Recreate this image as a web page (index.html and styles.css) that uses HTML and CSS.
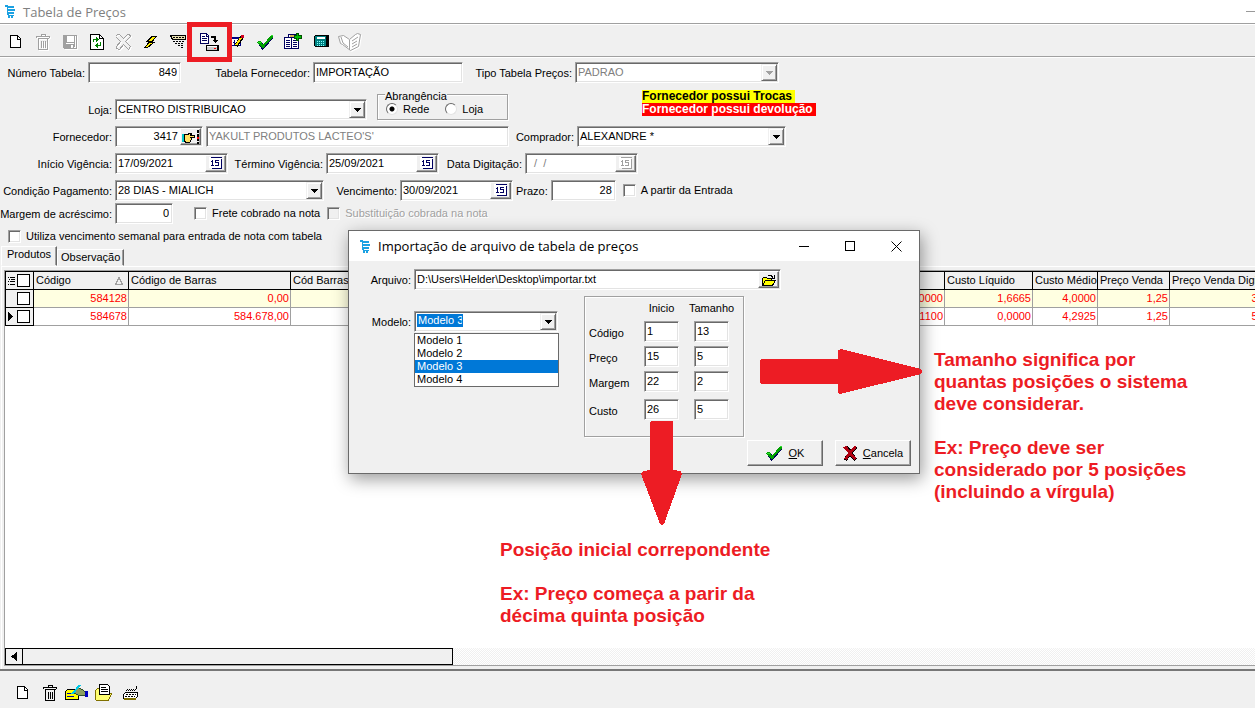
FILE: index.html
```html
<!DOCTYPE html>
<html lang="pt-BR">
<head>
<meta charset="utf-8">
<title>Tabela de Preços</title>
<link rel="stylesheet" href="styles.css">
</head>
<body>
<svg class="defs" aria-hidden="true">
  <symbol id="i-cart" viewBox="0 0 10 13"><path fill="#1ba1e2" d="M0 0h3v1h6v2H3v1h7v2H3v1h6v2H3l1 1h5v1H8v2H6v-2H5v2H3v-2l-1-3V2H0z"/><path fill="#fff" d="M3 3h6v1H3z" opacity=".5"/></symbol>
  <symbol id="i-new" viewBox="0 0 12 13"><path fill="#fff" stroke="#000" d="M.5.5h7l3 3v9H.5z"/><path fill="none" stroke="#000" d="M7.500 1v3h3"/></symbol>
  <symbol id="i-trash" viewBox="0 0 14 16"><path fill="none" stroke="currentColor" d="M.5 4V2.500h13V4M5 2V.5h4V2M1.500 4.500h11M2.500 5v10.500h9V5M5.500 6.500v7M7.500 6.500v7M9.500 6.500v7"/></symbol>
  <symbol id="i-check" viewBox="0 0 17 16"><path fill="#00005a" d="M1 9l3-2 3 4 8-9 1 2-8 10-3 2z"/><path fill="#00a000" d="M0 8l2-1h2l2 4 8-10h2v2L8 12l-2 2H5z"/><path fill="none" stroke="#30e030" d="M1 8.500h2.500M14 1.500h2"/></symbol>
  <symbol id="i-cal" viewBox="0 0 14 13"><path fill="#fff" d="M0 0h12v11H0z"/><path fill="none" stroke="currentColor" d="M1.500.5h11M2.500 11.500h10v-10M3.500 3v6M2 4.500h2M2 8.500h3M10 3.500H6.500v2h3v3H6"/></symbol>
</svg>

<header class="titlebar">
  <svg class="cart"><use href="#i-cart"/></svg>
  <span>Tabela de Preços</span>
  <button class="main-min" aria-label="Minimizar"></button>
</header>

<nav class="toolbar" aria-label="Ferramentas">
  <button class="tool" aria-label="Novo"><svg width="12" height="13"><use href="#i-new"/></svg></button>
  <button class="tool tool--off" aria-label="Excluir"><svg width="14" height="16"><use href="#i-trash"/></svg></button>
  <button class="tool tool--off" aria-label="Salvar"><svg width="14" height="14" viewBox="0 0 14 14"><path fill="none" stroke="currentColor" d="M.5.500h13v13H1.500l-1-1zM3 1v6h8V1M3.500 13V9h7v4"/><path fill="currentColor" d="M4 9h4v4H4zM1 1h2v12H1zM11 2h1v10h-1z"/><path fill="#fff" d="M4 1h6v5H4zM9 10h1v2H9z"/></svg></button>
  <button class="tool" aria-label="Atualizar"><svg width="14" height="16" viewBox="0 0 14 16"><path fill="#fff" stroke="#000" d="M.5.500h9l4 4v11H.5z"/><path fill="none" stroke="#000" d="M9.500 1v3.500H13"/><path fill="none" stroke="#008000" d="M3.500 8V5.500H6M10.500 8v3.500H8"/><path fill="#008000" d="M6 3l3 2.500L6 8zM8 9v5l-3-2.500z"/></svg></button>
  <button class="tool tool--off" aria-label="Cancelar"><svg width="16" height="16" viewBox="0 0 16 16"><path fill="none" stroke="currentColor" d="M1.500.5h2l4 4 4-4h2l1 2-5 5 5 5-2 3-5-5-4 5-3-1v-2l4-5-5-5z"/></svg></button>
  <button class="tool" aria-label="Executar"><svg width="13" height="12" viewBox="0 0 13 12"><path fill="#fff000" stroke="#000" d="M12.500.5H8l-5 5h3l-5.500 6h3l7-5.500H7.500z"/></svg></button>
  <button class="tool" aria-label="Impressão"><svg width="16" height="15" viewBox="0 0 16 15"><path fill="#e8e0b0" stroke="#000" d="M.5 1.500h15v4H2.500z"/><path fill="none" stroke="#000" stroke-dasharray="2 1" d="M3 3.500h12M3 7.500h12M5 9.500h9M8 11.500h6M11 13.500h3"/></svg></button>
  <button class="tool tool--marked" aria-label="Importar arquivo"><svg width="19" height="18" viewBox="0 0 19 18"><path fill="#fff" stroke="#00005a" d="M.5.500h6l2 2v8H.5z"/><path fill="none" stroke="#00005a" d="M2 3.500h3M2 5.500h5M2 7.500h5M6.500 1v2H8"/><path fill="none" stroke="#000" stroke-width="2" d="M11 4h4v4"/><path fill="#000" d="M12 7h6l-3 3zM6 12h13v6H6z"/><path fill="#ccc" d="M7 13h10v4H7z"/><path fill="#fff" d="M7 13h10v1H7z"/><path fill="#f00" d="M14 15h2v1h-2z"/></svg></button>
  <button class="tool" aria-label="Editar"><svg width="16" height="15" viewBox="0 0 16 15"><path fill="#fff" stroke="#000080" d="M.5 3.500h11v8H.5z"/><path fill="#000080" d="M0 3h12v2H0z"/><path fill="none" stroke="#000080" stroke-dasharray="2 1" d="M1 8.500h10M5.500 6v6"/><path stroke="#000" stroke-width="4" d="M7 12l6-9"/><path stroke="#ffe000" stroke-width="2" d="M7 11l5-7"/><path fill="#d00020" d="M12 1h3v3h-3z"/></svg></button>
  <button class="tool" aria-label="Confirmar"><svg width="17" height="16"><use href="#i-check"/></svg></button>
  <button class="tool" aria-label="Copiar tabela"><svg width="18" height="17" viewBox="0 0 18 17"><path fill="#fff" stroke="#000060" d="M4.500 1.500h10v11h-10z"/><path fill="#fff" stroke="#000060" d="M.5 4.500h7v11H.5zM7.500 4.500h7v11h-7z"/><path fill="none" stroke="#000060" d="M2 7.500h4M2 9.500h4M2 11.500h4M2 13.500h4M9 7.500h4M9 9.500h4M9 11.500h4M9 13.500h4"/><path fill="#d8b050" d="M6 2h6v2H6z"/><path fill="#00c000" stroke="#005000" d="M12.500.500h2v2h3v3h-3v2h-2v-2h-2v-3h2z"/></svg></button>
  <button class="tool" aria-label="Calculadora"><svg width="15" height="13" viewBox="0 0 15 13"><path fill="#000" d="M0 1L2 0h12l1 1v11H1l-1-1z"/><path fill="#008080" d="M1 1h11v10H1z"/><path fill="#fff" d="M3 2h8v2H3z"/><path fill="none" stroke="#80ffff" stroke-dasharray="1 1" d="M3 6.500h8M3 8.500h8M3 10.500h8"/></svg></button>
  <button class="tool tool--off" aria-label="Catálogo"><svg class="smooth" width="23" height="18" viewBox="0 0 23 18"><path fill="#fff" stroke="currentColor" d="M.5 3.500l5-1 6 4 6-5 2-1 3 1-2 12-8 4-8-6-2-1z"/><path fill="none" stroke="currentColor" d="M11.500 7v10M14 8l6-4M14 11l5-3M14 14l5-3M3 4l2 6 5 4"/></svg></button>
</nav>

<form class="form">
  <div class="row">
    <label class="lbl lbl--85" for="num">Número Tabela:</label>
    <span class="field w-93"><input class="num" id="num" value="849"></span>
    <label class="lbl lbl--126" for="forntab">Tabela Fornecedor:</label>
    <span class="field w-150"><input id="forntab" value="IMPORTAÇÃO"></span>
    <label class="lbl lbl--106" for="tipo">Tipo Tabela Preços:</label>
    <span class="field field--drop field--off w-204"><select id="tipo" disabled><option>PADRAO</option></select></span>
  </div>
  <div class="row row--group">
    <label class="lbl lbl--main" for="loja">Loja:</label>
    <span class="field field--drop w-252"><select id="loja"><option>CENTRO DISTRIBUICAO</option></select></span>
    <fieldset class="group">
      <legend>Abrangência</legend>
      <label class="opt"><input class="radio" type="radio" name="abr" checked>Rede</label>
      <label class="opt"><input class="radio" type="radio" name="abr">Loja</label>
    </fieldset>
    <div class="alerts">
      <strong class="alert alert--yellow">Fornecedor possui Trocas</strong>
      <strong class="alert alert--red">Fornecedor possui devolução</strong>
    </div>
  </div>
  <div class="row">
    <label class="lbl lbl--main" for="forn">Fornecedor:</label>
    <span class="field w-88"><input class="num" id="forn" value="3417"><button type="button" class="mini" aria-label="Procurar"><svg width="18" height="14" viewBox="0 0 18 14"><path fill="#00c8c8" d="M0 4h2v8H0z"/><path fill="#ffe060" stroke="#000" d="M2.500 4.500h3l2-1h2l-1 2h4v2h-4l1 1-1 3-1 1h-3l-2-1z"/><path stroke="#000" stroke-width="2" stroke-dasharray="3 1" d="M16 0v14"/><path fill="#f00" d="M15 7h2v2h-2z"/></svg></button></span>
    <span class="field field--off w-303"><input aria-label="Nome do fornecedor" value="YAKULT PRODUTOS LACTEO'S'" disabled></span>
    <label class="lbl lbl--62" for="comp">Comprador:</label>
    <span class="field field--drop w-209"><select id="comp"><option>ALEXANDRE *</option></select></span>
  </div>
  <div class="row">
    <label class="lbl lbl--main" for="ini">Início Vigência:</label>
    <span class="field w-113"><input id="ini" value="17/09/2021"><button type="button" class="mini mini--cal" aria-label="Calendário"><svg width="14" height="13"><use href="#i-cal"/></svg></button></span>
    <label class="lbl lbl--92" for="fim">Término Vigência:</label>
    <span class="field w-113"><input id="fim" value="25/09/2021"><button type="button" class="mini mini--cal" aria-label="Calendário"><svg width="14" height="13"><use href="#i-cal"/></svg></button></span>
    <label class="lbl lbl--80" for="dig">Data Digitação:</label>
    <span class="field field--off w-113"><input id="dig" value="&nbsp; /&nbsp; /" disabled><button type="button" class="mini mini--cal" aria-label="Calendário" disabled><svg width="14" height="13"><use href="#i-cal"/></svg></button></span>
  </div>
  <div class="row">
    <label class="lbl lbl--main" for="cond">Condição Pagamento:</label>
    <span class="field field--drop w-209"><select id="cond"><option>28 DIAS - MIALICH</option></select></span>
    <label class="lbl lbl--70" for="venc">Vencimento:</label>
    <span class="field w-113"><input id="venc" value="30/09/2021"><button type="button" class="mini mini--cal" aria-label="Calendário"><svg width="14" height="13"><use href="#i-cal"/></svg></button></span>
    <label class="lbl" for="prazo">Prazo:</label>
    <span class="field w-65"><input class="num" id="prazo" value="28"></span>
    <label class="opt opt--near"><input class="check" type="checkbox">A partir da Entrada</label>
  </div>
  <div class="row row--tight">
    <label class="lbl lbl--main" for="marg">Margem de acréscimo:</label>
    <span class="field w-58"><input class="num" id="marg" value="0"></span>
    <label class="opt opt--gap"><input class="check" type="checkbox">Frete cobrado na nota</label>
    <label class="opt opt--off opt--near"><input class="check" type="checkbox" disabled>Substituição cobrada na nota</label>
  </div>
  <div class="row row--tight">
    <label class="opt opt--start"><input class="check" type="checkbox">Utiliza vencimento semanal para entrada de nota com tabela</label>
  </div>
</form>

<main class="content">
  <div class="tabs" role="tablist">
    <button class="tab tab--on" role="tab" aria-selected="true">Produtos</button>
    <button class="tab" role="tab" aria-selected="false">Observação</button>
  </div>
  <section class="panel">
    <div class="grid">
      <table>
        <colgroup><col class="c-sel"><col class="c-cod"><col class="c-bar"><col class="c-cbar"><col class="c-tot"><col class="c-liq"><col class="c-med"><col class="c-ven"><col class="c-dig"></colgroup>
        <thead>
          <tr>
            <th class="sel"><div class="selbox"><svg width="8" height="10" viewBox="0 0 8 10"><path fill="none" stroke="#000" d="M0 1.500h1M2 1.500h5M1 3.500h1M3 3.500h4M0 5.500h1M2 5.500h5M0 8.500h1M2 8.500h5"/></svg><input class="gcheck" type="checkbox" aria-label="Marcar todos"></div></th>
            <th><div class="sorted">Código<svg width="8" height="8" viewBox="0 0 8 8"><path fill="none" stroke="#a0a0a0" d="M.5 7.500h7L4 .5z"/></svg></div></th>
            <th>Código de Barras</th><th>Cód Barras</th><th></th><th>Custo Líquido</th><th>Custo Médio</th><th>Preço Venda</th><th>Preço Venda Digitado</th>
          </tr>
        </thead>
        <tbody>
          <tr class="alt">
            <td class="sel"><div class="selbox"><input class="gcheck" type="checkbox" aria-label="Marcar 584128"></div></td>
            <td>584128</td><td>0,00</td><td></td><td>1,0000</td><td>1,6665</td><td>4,0000</td><td>1,25</td><td>3,00</td>
          </tr>
          <tr>
            <td class="sel"><div class="selbox"><svg width="5" height="9" viewBox="0 0 5 9"><path d="M0 0l5 4.500L0 9z"/></svg><input class="gcheck" type="checkbox" aria-label="Marcar 584678"></div></td>
            <td>584678</td><td>584.678,00</td><td></td><td>1,1100</td><td>0,0000</td><td>4,2925</td><td>1,25</td><td>5,00</td>
          </tr>
        </tbody>
      </table>
      <div class="scroll"><button class="scroll-left" aria-label="Rolar à esquerda"><svg width="6" height="9" viewBox="0 0 6 9"><path d="M6 0L0 4.500 6 9z"/></svg></button><div class="thumb"></div></div>
    </div>
  </section>
</main>

<footer class="bottombar">
  <button class="tool" aria-label="Novo item"><svg width="12" height="13"><use href="#i-new"/></svg></button>
  <button class="tool" aria-label="Excluir item"><svg width="14" height="16"><use href="#i-trash"/></svg></button>
  <button class="tool" aria-label="Editar item"><svg width="23" height="15" viewBox="0 0 23 15"><path fill="#ff0" stroke="#000" d="M.5 6.500l2-2h11v10H.5z"/><path stroke="#0000a0" d="M2 8.500h9M2 11.500h7"/><path fill="#8da060" stroke="#305030" d="M7.500 8.500l6-6 5 3 2 2v3h-7l-3-2z"/><path fill="#0000c0" d="M20 6h3v6h-3z"/><path stroke="#00c8e8" stroke-width="2" d="M7 9l8-9"/></svg></button>
  <button class="tool" aria-label="Abrir item"><svg width="17" height="17" viewBox="0 0 17 17"><path fill="#ffff70" stroke="#807000" d="M.5 15.500V6.500l2-2h9v5h5l-3 7h-12z"/><path fill="#fff" stroke="#000" d="M4.500.500h8l2 2v8h-10z"/><path stroke="#000" d="M6 3.500h5M6 5.500h7M6 7.500h7"/></svg></button>
  <button class="tool" aria-label="Teclado"><svg width="15" height="14" viewBox="0 0 15 14"><path fill="none" stroke="#000" stroke-dasharray="1 1" d="M3 4.500h9M4 3.500h8"/><path stroke="#000" d="M13.500 0v3M12 3.500h1"/><path fill="#fff" stroke="#000" d="M2.500 6.500h12v4l-2 2H.5v-4z"/><path stroke="#807000" stroke-width="2" d="M1 13h12"/><path stroke="#000" stroke-dasharray="2 1" d="M3 8.500h10M2 10.500h10"/></svg></button>
</footer>

<section class="dialog" role="dialog" aria-labelledby="dlg-title">
  <header class="dlg-title">
    <svg class="cart"><use href="#i-cart"/></svg>
    <h1 id="dlg-title">Importação de arquivo de tabela de preços</h1>
    <button class="win" aria-label="Minimizar"><svg width="11" height="11" viewBox="0 0 11 11"><path stroke="#000" d="M0 5.500h10"/></svg></button>
    <button class="win" aria-label="Maximizar"><svg width="11" height="11" viewBox="0 0 11 11"><path fill="none" stroke="#000" d="M.5.500h9v9h-9z"/></svg></button>
    <button class="win" aria-label="Fechar"><svg class="smooth" width="11" height="11" viewBox="0 0 11 11"><path stroke="#000" d="M.5.500l10 10M10.500.500l-10 10"/></svg></button>
  </header>
  <div class="dlg-body">
    <div class="row">
      <label class="lbl lbl--62" for="arq">Arquivo:</label>
      <span class="field w-367"><input id="arq" value="D:\Users\Helder\Desktop\importar.txt"><button type="button" class="mini" aria-label="Abrir arquivo"><svg width="14" height="12" viewBox="0 0 14 12"><path fill="none" stroke="#000" d="M6 1.500h3l2 2M12.500 1v3H9"/><path fill="#ff0" stroke="#000" d="M.5 11V4.500l1-1h3l1 1h4v2h4l-3 5H.5l3-5h6"/></svg></button></span>
    </div>
    <div class="dlg-cols">
      <div class="row row--model">
        <label class="lbl lbl--62" for="mod">Modelo:</label>
        <span class="field field--drop field--open w-144"><select class="picked" id="mod"><option>Modelo 3</option><option>Modelo 1</option><option>Modelo 2</option><option>Modelo 4</option></select>
          <ul class="list" role="listbox" aria-label="Modelos">
            <li role="option">Modelo 1</li><li role="option">Modelo 2</li><li class="on" role="option" aria-selected="true">Modelo 3</li><li role="option">Modelo 4</li>
          </ul>
        </span>
      </div>
      <div class="positions">
        <span></span><span class="poshead">Inicio</span><span class="poshead">Tamanho</span>
        <label for="p1">Código</label><span class="field"><input id="p1" value="1"></span><span class="field"><input aria-label="Tamanho do código" value="13"></span>
        <label for="p2">Preço</label><span class="field"><input id="p2" value="15"></span><span class="field"><input aria-label="Tamanho do preço" value="5"></span>
        <label for="p3">Margem</label><span class="field"><input id="p3" value="22"></span><span class="field"><input aria-label="Tamanho da margem" value="2"></span>
        <label for="p4">Custo</label><span class="field"><input id="p4" value="26"></span><span class="field"><input aria-label="Tamanho do custo" value="5"></span>
      </div>
    </div>
    <div class="actions">
      <button class="btn"><svg width="17" height="16"><use href="#i-check"/></svg><span><u>O</u>K</span></button>
      <button class="btn"><svg width="14" height="15" viewBox="0 0 14 15"><path fill="#000" d="M1 1l4-1 3 4 4-4 2 2-4 5 4 6-3 2-4-5-3 5-3-1 1-3 3-4z"/><path fill="#b00010" d="M0 1l4-1 3 5 4-5h2v2L9 7l4 5-2 2-4-5-3 5-3-1 4-6z"/></svg><span><u>C</u>ancela</span></button>
    </div>
  </div>
</section>

<svg class="arrow arrow--right" viewBox="0 0 162 46"><path d="M1 10h77V1l3-1 80 20q2 2 0 5L80 45l-2-1v-9H1l-1-1V11z"/></svg>
<svg class="arrow arrow--down" viewBox="0 0 41 104"><path d="M10 0h21l1 1v48l8 1 1 3-18 50q-2 2-4 0L0 53l2-3 7-1V1z"/></svg>
<aside class="note note--down"><p>Posição inicial correpondente</p><p>Ex: Preço começa a parir da<br>décima quinta posição</p></aside>
<aside class="note note--right"><p>Tamanho significa por<br>quantas posições o sistema<br>deve considerar.</p><p>Ex: Preço deve ser<br>considerado por 5 posições<br>(incluindo a vírgula)</p></aside>
</body>
</html>
```
FILE: styles.css
```css
*, *::before, *::after { box-sizing: border-box; }
body {
  margin: 0;
  height: 100vh;
  display: flex;
  flex-direction: column;
  position: relative;
  overflow: hidden;
  background: #f0f0f0;
  color: #000;
  font: 11px/13px "Liberation Sans", Arial, sans-serif;
}
button, input, select { font: inherit; color: inherit; margin: 0; }
button { padding: 0; border: 0; background: none; }
svg { display: block; flex: none; shape-rendering: crispEdges; }
.smooth { shape-rendering: auto; }
.defs { position: absolute; width: 0; height: 0; }
.cart { width: 10px; height: 13px; }

/* Title bar and toolbars */
.titlebar {
  display: flex; align-items: center; gap: 8px;
  height: 23px; padding: 0 0 0 5px;
  background: #fff; color: #808080;
  font: 13px/18px "Open Sans", "Noto Sans", sans-serif;
}
.main-min { margin-left: auto; width: 9px; height: 1px; background: #999; }
.toolbar {
  display: flex; align-items: center;
  height: 35px; padding: 2px 0 0 2px;
  border-top: 1px solid #a0a0a0; border-bottom: 1px solid #fff;
  box-shadow: inset 0 1px #fff, inset 0 -1px #a0a0a0;
}
.tool { display: grid; place-items: center; flex: none; width: 27px; height: 26px; }
.tool--marked ~ .tool { width: 28px; }
.tool--off { color: #a0a0a0; filter: drop-shadow(1px 1px #fff); }
.tool--marked {
  width: 45px; height: 40px; margin: 0 -9px 0 -4px;
  border: 5px solid #ed1c24; background: #f0f0f0; z-index: 1; position: relative;
}
.bottombar {
  display: flex; align-items: center; height: 39px; flex: none;
  padding: 6px 0 0 9px; border-top: 2px solid #777;
}

/* Form */
.form { display: flex; flex-direction: column; gap: 6px; padding-top: 4px; }
.row { display: flex; align-items: center; gap: 3px; min-height: 21px; }
.row--tight { margin-top: -4px; }
.row--group { min-height: 27px; margin-top: 4px; align-items: flex-end; }
.row--group .lbl { padding-bottom: 3px; }
.lbl { text-align: right; white-space: nowrap; padding-top: 1px; flex: none; }
.lbl--main { width: 112px; }
.lbl--62 { width: 62px; }
.lbl--70 { width: 70px; }
.lbl--80 { width: 80px; }
.lbl--85 { width: 85px; }
.lbl--92 { width: 92px; }
.lbl--106 { width: 106px; }
.lbl--126 { width: 126px; }
.field {
  position: relative;
  display: flex; height: 21px; flex: none; padding: 1px;
  background: #fff; border: 1px solid; border-color: #a0a0a0 #fff #fff #a0a0a0;
  box-shadow: inset 1px 1px #696969, inset -1px -1px #e3e3e3;
}
.field input, .field select {
  flex: 1; min-width: 0; width: 100%; height: 16px;
  padding: 0 1px; border: 0; outline: 0; background: transparent;
  appearance: none; line-height: 16px; opacity: 1;
}
.field .num { text-align: right; padding-right: 2px; }
.field--off { color: #808080; }
.field--drop { --arrow: #000; }
.field--off.field--drop { --arrow: #a0a0a0; }
.field--drop::after {
  content: ""; width: 16px; margin-left: auto; flex: none;
  border: 1px solid; border-color: #f0f0f0 #696969 #696969 #f0f0f0;
  box-shadow: inset 1px 1px #fff, inset -1px -1px #a0a0a0;
  background: linear-gradient(var(--arrow) 0 0) center 6px / 7px 1px no-repeat,
    linear-gradient(var(--arrow) 0 0) center 7px / 5px 1px no-repeat,
    linear-gradient(var(--arrow) 0 0) center 8px / 3px 1px no-repeat,
    linear-gradient(var(--arrow) 0 0) center 9px / 1px 1px no-repeat, #f0f0f0;
}
.mini {
  display: grid; place-items: center; flex: none; width: 21px;
  background: #f0f0f0; border: 1px solid;
  border-color: #fff #696969 #696969 #fff; box-shadow: inset -1px -1px #a0a0a0;
}
.mini--cal { color: #000060; }
.mini:disabled { color: #a0a0a0; }
.w-58 { width: 58px; }
.w-65 { width: 65px; }
.w-88 { width: 88px; }
.w-93 { width: 93px; }
.w-113 { width: 113px; }
.w-144 { width: 144px; }
.w-150 { width: 150px; }
.w-204 { width: 204px; }
.w-209 { width: 209px; }
.w-252 { width: 252px; }
.w-303 { width: 303px; }
.w-367 { width: 367px; }
.group {
  position: relative; display: flex; align-items: center; gap: 16px;
  width: 131px; height: 26px; margin: 0 0 0 7px; padding: 4px 0 0 8px;
  border: 1px solid #a0a0a0; box-shadow: 1px 1px #fff, inset 1px 1px #fff;
}
.group legend { position: absolute; top: -5px; left: 7px; padding: 0; background: #f0f0f0; line-height: 12px; }
.alerts { display: flex; flex-direction: column; align-items: flex-start; align-self: flex-start; margin: -3px 0 0 131px; font-size: 12px; }
.alert { padding-right: 3px; }
.alert--yellow { background: #ff0; }
.alert--red { background: #f00; color: #fff; }
.opt { display: flex; align-items: center; gap: 5px; white-space: nowrap; }
.opt--start { margin-left: 8px; }
.opt--gap { margin-left: 18px; }
.opt--near { margin-left: 4px; }
.opt--off { color: #a0a0a0; text-shadow: 1px 1px #fff; }
.check, .radio, .gcheck { appearance: none; flex: none; width: 13px; height: 13px; margin: 0; background: #fff; }
.check {
  border: 1px solid; border-color: #a0a0a0 #fff #fff #a0a0a0;
  box-shadow: inset 1px 1px #696969, inset -1px -1px #e3e3e3;
}
.check:disabled { background: #f0f0f0; }
.radio {
  width: 12px; height: 12px; border-radius: 50%;
  border: 1px solid; border-color: #696969 #e3e3e3 #e3e3e3 #696969;
}
.radio:checked { background: radial-gradient(circle, #000 2px, #fff 3px); }
.gcheck { border: 1px solid #000; }

/* Tabs and data grid */
.content { flex: 1; min-height: 0; display: flex; flex-direction: column; }
.tabs { display: flex; align-items: flex-end; height: 20px; padding-left: 1px; flex: none; margin-top: -1px; }
.tab { height: 17px; padding: 0 3px; border: 1px solid; border-color: #fff #696969 transparent #fff; box-shadow: inset -1px 0 #a0a0a0; white-space: nowrap; }
.tab--on { height: 20px; padding: 0 5px 4px; }
.panel {
  flex: 1; min-height: 0; display: flex; margin-left: 1px; padding: 3px 0 3px 2px;
  border-top: 1px solid #fff; border-left: 1px solid #fff;
}
.grid {
  flex: 1; min-width: 0; display: flex; flex-direction: column; overflow: hidden;
  background: #fff; border: 1px solid #a0a0a0; border-right: 0;
}
table { width: 1270px; table-layout: fixed; border-collapse: separate; border-spacing: 0; flex: none; }
.c-sel { width: 29px; }
.c-cod { width: 95px; }
.c-bar { width: 162px; }
.c-cbar { width: 90px; }
.c-tot { width: 564px; }
.c-liq { width: 88px; }
.c-med { width: 65px; }
.c-ven { width: 72px; }
.c-dig { width: 105px; }
th, td { height: 18px; padding: 0 1px 0 2px; white-space: nowrap; overflow: hidden; border: solid #a0a0a0; border-width: 0 1px 1px 0; }
th { height: 19px; font-weight: 400; text-align: left; background: #f0f0f0; border-color: #000; border-top: 1px solid #000; }
td { color: #f00; text-align: right; }
.sel { padding: 0 3px 0 2px; background: #f0f0f0; border-color: #000; border-left: 1px solid #000; }
.alt td { background: #ffffe1; }
.alt td.sel { background: #f0f0f0; }
.selbox { display: flex; align-items: center; gap: 1px; }
.selbox .gcheck { margin-left: auto; }
.sorted { display: flex; align-items: center; justify-content: space-between; padding-right: 4px; }
.scroll {
  display: flex; margin-top: auto; height: 17px;
  background: repeating-conic-gradient(#fff 0 25%, #f0f0f0 0 50%) 0 0 / 2px 2px;
}
.scroll-left { display: grid; place-items: center; width: 18px; border: 1px solid #000; background: #f0f0f0; }
.thumb { width: 35%; max-width: 430px; border: 1px solid #000; border-left: 0; background: #f0f0f0; }

/* Import dialog */
.dialog {
  position: absolute; left: 348px; top: 230px; width: 572px; height: 244px;
  display: flex; flex-direction: column;
  background: #f0f0f0; border: 1px solid #6a6a6a; box-shadow: 2px 5px 16px rgba(0, 0, 0, .4);
}
.dlg-title { display: flex; align-items: center; height: 30px; padding-left: 11px; background: #fff; }
.dlg-title h1 { flex: 1; margin: 0 0 0 8px; font: 13px/18px "Open Sans", "Noto Sans", sans-serif; }
.win { display: grid; place-items: center; width: 46px; height: 29px; }
.dlg-body { flex: 1; display: flex; flex-direction: column; padding: 8px 8px 7px 0; }
.dlg-cols { display: flex; align-items: flex-start; }
.row--model { margin-top: 21px; }
.field--open .picked { flex: 0 0 46px; height: 13px; margin: 1px; line-height: 13px; background: #0078d7; color: #fff; }
.list {
  position: absolute; left: -1px; top: 21px; width: 145px; margin: 0; padding: 0;
  list-style: none; background: #fff; border: 1px solid #696969;
}
.list li { padding-left: 2px; line-height: 13px; }
.list .on { background: #0078d7; color: #fff; }
.positions {
  display: grid; grid-template-columns: 40px 35px 35px; grid-template-rows: 16px 21px 21px 21px 27px;
  gap: 4px 15px; align-items: center; align-content: start;
  margin: 6px 0 0 26px; width: 160px; height: 141px; padding: 4px 0 0 4px;
  border: 1px solid #a0a0a0; box-shadow: 1px 1px #fff, inset 1px 1px #fff;
}
.positions label { padding-top: 3px; }
.positions .field { width: 35px; }
.poshead { line-height: 14px; text-align: center; justify-self: center; align-self: start; }
.actions { display: flex; justify-content: flex-end; gap: 12px; margin-top: auto; }
.btn {
  display: flex; align-items: center; justify-content: center; gap: 6px;
  width: 76px; height: 26px; border: 1px solid; border-color: #fff #696969 #696969 #fff;
  box-shadow: inset -1px -1px #a0a0a0;
}

/* Annotations drawn over the windows */
.arrow { position: absolute; fill: #ed1c24; }
.arrow--right { left: 760px; top: 349px; width: 162px; height: 46px; }
.arrow--down { left: 641px; top: 421px; width: 41px; height: 104px; }
.note { position: absolute; color: #ed1c24; font-size: 19px; font-weight: 700; line-height: 22px; white-space: nowrap; }
.note p { margin: 0 0 22px; }
.note--down { left: 500px; top: 539px; }
.note--right { left: 934px; top: 349px; }
```
